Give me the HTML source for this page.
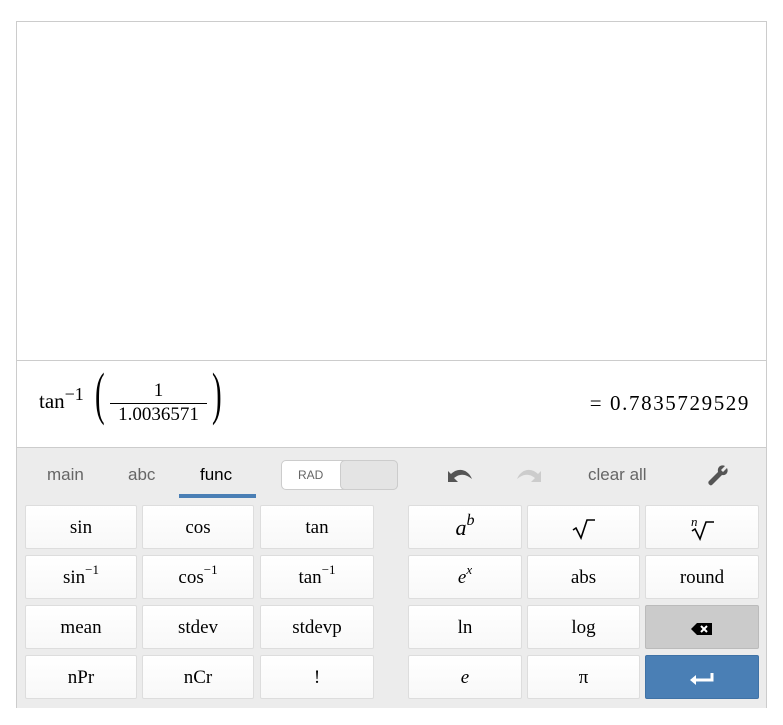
<!DOCTYPE html>
<html><head><style>
body{margin:0;background:#fff;font-family:"Liberation Sans",sans-serif;}
.box{position:absolute;left:16px;top:21px;width:749px;height:685px;border:1px solid #ccc;}
.expr{position:absolute;left:0;top:338px;width:749px;height:87px;border-top:1px solid #ccc;font-family:"Liberation Serif",serif;}
.pad{position:absolute;left:0;top:425px;width:749px;height:260px;background:#ececec;border-top:1px solid #ccc;}
.b{position:absolute;width:112px;height:44px;background:linear-gradient(#fff,#f8f8f8);border:1px solid #ddd;border-radius:2px;box-sizing:border-box;font-family:"Liberation Serif",serif;font-size:19px;text-align:center;line-height:44px;color:#000;}
.tab{position:absolute;top:17px;font-size:17px;color:#666;}
sup{font-size:13px;line-height:0;vertical-align:0;position:relative;top:-9px;}
</style></head><body>
<div class="box">
<div class="expr">
<div style="position:absolute;left:22px;top:28px;font-size:21px;">tan<sup style="font-size:18px;top:-8px">−1</sup></div>
<div style="position:absolute;left:78px;top:-1px;font-size:58px;transform:scaleX(0.5);transform-origin:left">(</div>
<div style="position:absolute;left:93px;top:19px;width:97px;text-align:center;font-size:19px;">1</div>
<div style="position:absolute;left:93px;top:42px;width:97px;border-top:1px solid #000"></div>
<div style="position:absolute;left:93px;top:43px;width:97px;text-align:center;font-size:19px;">1.0036571</div>
<div style="position:absolute;left:195px;top:-1px;font-size:58px;transform:scaleX(0.5);transform-origin:left">)</div>
<div style="position:absolute;right:16px;top:30px;font-size:21px;letter-spacing:1.6px">= 0.7835729529</div>
</div>
<div class="pad">
<div class="tab" style="left:30px">main</div>
<div class="tab" style="left:111px">abc</div>
<div class="tab" style="left:183px;color:#000">func</div>
<div style="position:absolute;left:162px;top:46px;width:77px;height:4px;background:#4a7fb5"></div>
<div style="position:absolute;left:264px;top:12px;width:117px;height:30px;border:1px solid #ccc;border-radius:5px;background:#fff;box-sizing:border-box;">
<span style="position:absolute;left:16px;top:7px;font-size:12px;color:#666">RAD</span>
<div style="position:absolute;left:58px;top:-1px;width:58px;height:30px;background:#e4e4e4;border:1px solid #ccc;border-radius:5px;box-sizing:border-box"></div></div>
<svg style="position:absolute;left:429px;top:18px" width="28" height="18" viewBox="0 0 28 18"><path d="M2 5 L2 16 L12 16 L8 12 C14 7 20 8 26 13 C22 3 12 1 5 8 Z" fill="#555"/></svg>
<svg style="position:absolute;left:498px;top:18px" width="28" height="18" viewBox="0 0 28 18"><path d="M26 5 L26 16 L16 16 L20 12 C14 7 8 8 2 13 C6 3 16 1 23 8 Z" fill="#ccc"/></svg>
<div class="tab" style="left:571px;color:#666">clear all</div>
<svg style="position:absolute;left:689px;top:15px" width="24" height="24" viewBox="0 0 24 24"><path d="M21 5 L17 9 L15 7 L19 3 C15 1 11 4 12 9 L3 18 C2 19 2 21 4 22 C5 23 6 22 7 21 L16 12 C20 13 23 9 21 5 Z" fill="#555"/></svg>
</div>
</div>
<div class="b" style="left:25px;top:505px">sin</div>
<div class="b" style="left:142px;top:505px">cos</div>
<div class="b" style="left:260px;top:505px;width:114px">tan</div>
<div class="b" style="left:408px;top:505px;width:114px;font-style:italic;font-size:22px">a<sup style="top:-10px;font-size:16px">b</sup></div>
<div class="b" style="left:527px;top:505px;width:113px"><svg width="24" height="22" viewBox="0 0 24 22" style="vertical-align:middle"><path d="M1 12 L4 10 L9 20 L15 2 H23" stroke="#000" stroke-width="1.6" fill="none"/></svg></div>
<div class="b" style="left:645px;top:505px;width:114px"><svg width="26" height="24" viewBox="0 0 26 24" style="vertical-align:middle"><text x="2" y="9" font-family="Liberation Serif" font-style="italic" font-size="13">n</text><path d="M3 14 L6 12 L11 22 L17 5 H25" stroke="#000" stroke-width="1.6" fill="none"/></svg></div>
<div class="b" style="left:25px;top:555px">sin<sup>−1</sup></div>
<div class="b" style="left:142px;top:555px">cos<sup>−1</sup></div>
<div class="b" style="left:260px;top:555px;width:114px">tan<sup>−1</sup></div>
<div class="b" style="left:408px;top:555px;width:114px;font-style:italic">e<sup>x</sup></div>
<div class="b" style="left:527px;top:555px;width:113px">abs</div>
<div class="b" style="left:645px;top:555px;width:114px">round</div>
<div class="b" style="left:25px;top:605px">mean</div>
<div class="b" style="left:142px;top:605px">stdev</div>
<div class="b" style="left:260px;top:605px;width:114px">stdevp</div>
<div class="b" style="left:408px;top:605px;width:114px">ln</div>
<div class="b" style="left:527px;top:605px;width:113px">log</div>
<div class="b" style="left:645px;top:605px;width:114px;background:#cbcbcb;border-color:#bbb"><svg width="22" height="14" viewBox="0 0 22 14" style="vertical-align:middle"><path d="M0 7 L6 1 H21 V13 H6 Z" fill="#000"/><path d="M10 4 L16 10 M16 4 L10 10" stroke="#fff" stroke-width="2"/></svg></div>
<div class="b" style="left:25px;top:655px">nPr</div>
<div class="b" style="left:142px;top:655px">nCr</div>
<div class="b" style="left:260px;top:655px;width:114px">!</div>
<div class="b" style="left:408px;top:655px;width:114px;font-style:italic">e</div>
<div class="b" style="left:527px;top:655px;width:113px">π</div>
<div class="b" style="left:645px;top:655px;width:114px;background:#4a7fb5;border-color:#3f72a6"><svg width="26" height="14" viewBox="0 0 26 14" style="vertical-align:middle"><path d="M23 1 V8 H5" stroke="#fff" stroke-width="3" fill="none"/><path d="M1 8 L7 3 V13 Z" fill="#fff"/></svg></div>
</body></html>
